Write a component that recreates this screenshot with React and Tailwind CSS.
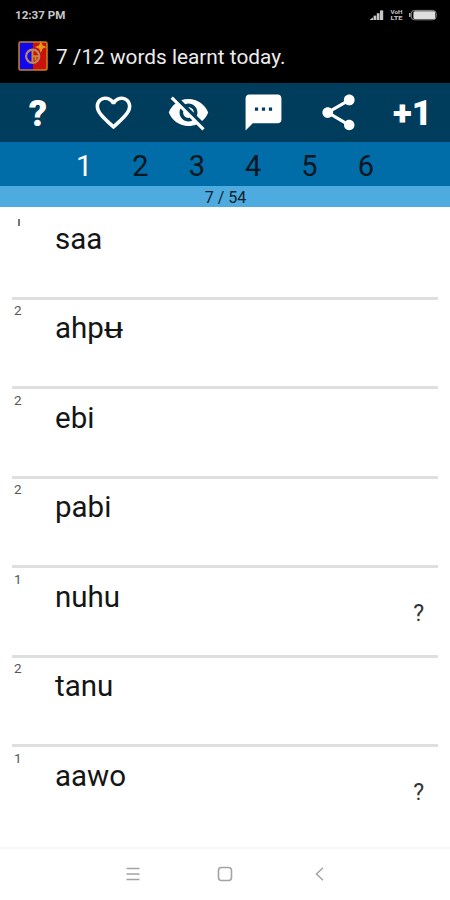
const words = [
  { level: '1', text: 'saa', clipped: true },
  { level: '2', text: 'ahp', tail: 'ʉ' },
  { level: '2', text: 'ebi' },
  { level: '2', text: 'pabi' },
  { level: '1', text: 'nuhu', unsure: true },
  { level: '2', text: 'tanu' },
  { level: '1', text: 'aawo', unsure: true },
];

function Icon({ children }) {
  return (
    <svg viewBox="0 0 24 24" className="ml-px size-[43px] fill-white">
      {children}
    </svg>
  );
}

function StatusIcons() {
  return (
    <svg viewBox="0 0 72 14" className="h-[14px] w-[72px]">
      <g fill="#c8c8c8">
        <path d="M2.5 12 L6.2 9.2V12z" />
        <rect x="6.6" y="7.6" width="2.7" height="4.4" />
        <rect x="9.8" y="5.2" width="2.7" height="6.8" />
        <rect x="13" y="2.4" width="3.2" height="9.6" />
      </g>
      <g fill="#c4c4c4" fontFamily="Roboto, sans-serif" fontWeight="700" fontSize="5.6">
        <text x="23.5" y="6" textLength="12" lengthAdjust="spacingAndGlyphs">VoH</text>
        <text x="23.5" y="12.2" textLength="12" lengthAdjust="spacingAndGlyphs">LTE</text>
      </g>
      <rect x="44.2" y="2.4" width="25" height="9.4" rx="3.4" fill="none" stroke="#8e8e8e" strokeWidth="1" />
      <rect x="46.4" y="3.2" width="21.8" height="7.8" rx="1.5" fill="#dedede" />
      <rect x="42" y="5" width="1.6" height="4" fill="#a8a8a8" />
    </svg>
  );
}

function AppLogo() {
  return (
    <svg viewBox="0 0 30 30" className="size-[30px]">
      <rect x="1" y="1" width="14.5" height="28" fill="#1208ee" />
      <rect x="15" y="1" width="14" height="28" fill="#c9120c" />
      <rect x="1" y="1" width="28" height="28" rx="1.5" fill="none" stroke="#c98222" strokeWidth="1.5" />
      <circle cx="14.7" cy="15.3" r="6.6" fill="none" stroke="#b8876a" strokeWidth="2.2" />
      <path d="M14.5 9v12.5M15 15.2h6.5M17.5 15v4.5" fill="none" stroke="#cf8530" strokeWidth="2" />
      <path d="M22.8 1.8l1.3 2.9 3 1.3-3 1.3-1.3 2.9-1.3-2.9-3-1.3 3-1.3z" fill="#e39a1b" stroke="#e39a1b" strokeWidth="1.2" />
    </svg>
  );
}

export default function App() {
  return (
    <div className="flex h-[900px] w-[450px] flex-col overflow-hidden bg-white font-['Roboto',sans-serif] text-[#151515]">
      <header className="h-[83px] shrink-0 bg-black">
        <div className="flex h-[30px] items-center justify-between pr-[11px] pl-[15px]">
          <span className="pt-[2px] text-[11.6px] leading-none font-bold text-[#c8c8c8]">12:37 PM</span>
          <StatusIcons />
        </div>
        <div className="flex h-[52px] items-center gap-[8px] pl-[18px]">
          <AppLogo />
          <span className="pt-[2px] text-[20.8px] leading-none whitespace-pre text-[#ececec]">7 /12 words learnt today.</span>
        </div>
      </header>

      <nav className="grid h-[59px] shrink-0 grid-cols-6 place-items-center bg-[#003d5c] text-white">
        <span className="pt-[3px] pl-px text-[36px] leading-none font-black">?</span>
        <Icon>
          <path d="M16.5 3c-1.74 0-3.41.81-4.5 2.09C10.91 3.81 9.24 3 7.5 3 4.42 3 2 5.42 2 8.5c0 3.78 3.4 6.86 8.55 11.54L12 21.35l1.45-1.32C18.6 15.36 22 12.28 22 8.5 22 5.42 19.58 3 16.5 3zm-4.4 15.55l-.1.1-.1-.1C7.14 14.24 4 11.39 4 8.5 4 6.5 5.5 5 7.5 5c1.54 0 3.04.99 3.57 2.36h1.87C13.46 5.99 14.96 5 16.5 5c2 0 3.5 1.5 3.5 3.5 0 2.89-3.14 5.74-7.9 10.05z" />
        </Icon>
        <Icon>
          <path d="M12 7c2.76 0 5 2.24 5 5 0 .65-.13 1.26-.36 1.83l2.92 2.92c1.51-1.26 2.7-2.89 3.43-4.75-1.73-4.39-6-7.5-11-7.5-1.4 0-2.74.25-3.98.7l2.16 2.16C10.74 7.13 11.35 7 12 7zM2 4.27l2.28 2.28.46.46C3.08 8.3 1.78 10.02 1 12c1.73 4.39 6 7.5 11 7.5 1.55 0 3.03-.3 4.38-.84l.42.42L19.73 22 21 20.73 3.27 3 2 4.27zM7.53 9.8l1.55 1.55c-.05.21-.08.43-.08.65 0 1.66 1.34 3 3 3 .22 0 .44-.03.65-.08l1.55 1.55c-.67.33-1.41.53-2.2.53-2.76 0-5-2.24-5-5 0-.79.2-1.53.53-2.2zm4.31-.78l3.15 3.15.02-.16c0-1.66-1.34-3-3-3l-.17.01z" />
        </Icon>
        <Icon>
          <path fillRule="evenodd" d="M20 2H4c-1.1 0-2 .9-2 2v18l4-4h14c1.1 0 2-.9 2-2V4c0-1.1-.9-2-2-2zM7.2 9.2h1.8v1.8H7.2zM11.1 9.2h1.8v1.8h-1.8zM15 9.2h1.8v1.8H15z" />
        </Icon>
        <Icon>
          <path d="M18 16.08c-.76 0-1.44.3-1.96.77L8.91 12.7c.05-.23.09-.46.09-.7s-.04-.47-.09-.7l7.05-4.11c.54.5 1.25.81 2.04.81 1.66 0 3-1.34 3-3s-1.34-3-3-3-3 1.34-3 3c0 .24.04.47.09.7L8.04 9.81C7.5 9.31 6.79 9 6 9c-1.66 0-3 1.34-3 3s1.34 3 3 3c.79 0 1.5-.31 2.04-.81l7.12 4.16c-.05.21-.08.43-.08.65 0 1.61 1.31 2.92 2.92 2.92s2.92-1.31 2.92-2.92-1.31-2.92-2.92-2.92z" />
        </Icon>
        <span className="pt-[2px] text-[35px] leading-none font-black">+1</span>
      </nav>

      <div className="grid h-[44px] shrink-0 grid-cols-6 items-center bg-[#006da9] pt-[4px] px-[56px] text-center text-[29px] leading-none text-[#0b1720]">
        <span className="text-white">1</span>
        <span>2</span>
        <span>3</span>
        <span>4</span>
        <span>5</span>
        <span>6</span>
      </div>

      <div className="flex h-[21px] shrink-0 items-center justify-center bg-[#4dabdf] pt-[3px] pl-px text-[16px] leading-none text-[#10222d]">
        7 / 54
      </div>

      <main className="flex h-[640px] shrink-0 flex-col px-[12px] pt-[3px]">
        {words.map((word, i) => (
          <div
            key={i}
            className="flex h-[89.5px] shrink-0 border-b-[3px] border-[#dfdfdf] last:border-transparent"
          >
            <span className="w-[43px] pt-[4.5px] pl-[2px] text-[13.5px] leading-[13px] text-[#555]">
              {word.clipped ? <span className="mt-[4px] ml-[4px] block h-[7px] w-[1.5px] bg-[#777]" /> : word.level}
            </span>
            <span className="flex-1 pt-[10.5px] text-[29.5px] leading-[36px]">
              {word.text}
              {word.tail && <span className="inline-block origin-left scale-x-[1.17]">{word.tail}</span>}
            </span>
            {word.unsure && <span className="pt-[31.5px] pr-[14px] text-[23px] leading-[28px] text-[#333]">?</span>}
          </div>
        ))}
      </main>

      <footer className="grid flex-1 grid-cols-[180px_90px_180px] items-center border-t-2 border-[#f6f6f6] pb-[2px]">
        <svg viewBox="0 0 14 14" className="mr-[40px] size-[14px] justify-self-end" stroke="#a3a3a3" strokeWidth="1.6">
          <path d="M.5 1.5h13M.5 7h13M.5 12.5h13" />
        </svg>
        <svg viewBox="0 0 16 16" className="size-[16px] justify-self-center" fill="none" stroke="#a3a3a3" strokeWidth="1.6">
          <rect x="1.5" y="1.5" width="13" height="13" rx="3" />
        </svg>
        <svg viewBox="0 0 9 14" className="ml-[45px] h-[14px] w-[9px]" fill="none" stroke="#a3a3a3" strokeWidth="1.5">
          <path d="M8 .8L1.5 7 8 13.2" />
        </svg>
      </footer>
    </div>
  );
}
